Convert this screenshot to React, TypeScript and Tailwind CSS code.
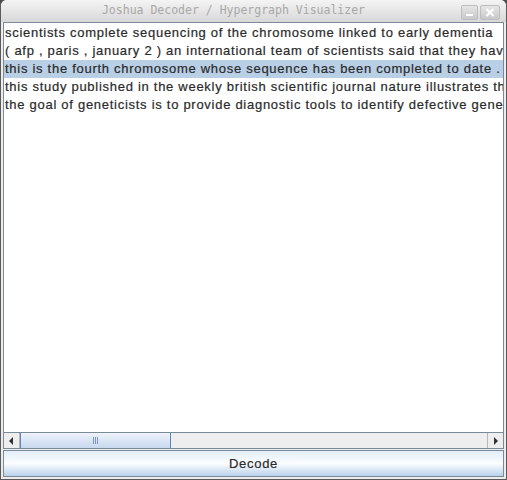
import React from "react";

const rows = [
  "scientists complete sequencing of the chromosome linked to early dementia",
  "( afp , paris , january 2 ) an international team of scientists said that they have",
  "this is the fourth chromosome whose sequence has been completed to date .",
  "this study published in the weekly british scientific journal nature illustrates the",
  "the goal of geneticists is to provide diagnostic tools to identify defective genes",
];

const textStyle: React.CSSProperties = {
  fontFamily: '"Liberation Sans", Arial, sans-serif',
  WebkitTextStroke: "0.2px #2a2a2a",
};

export default function App() {
  return (
    <div className="w-[507px] h-[480px] bg-[#4a4a4a] overflow-hidden">
      <div className="w-[507px] h-[480px] flex flex-col rounded-t-[6px] bg-[#ececec] border-l border-r border-b border-[#5a5a5a]">
        {/* title bar */}
        <div className="h-[22px] shrink-0 relative flex items-center justify-center rounded-t-[6px] bg-gradient-to-b from-[#f4f4f4] to-[#d8d8d8]">
          <span className="text-[11.5px] text-[#a8a8a8] pr-[40px]" style={{ fontFamily: '"DejaVu Sans Mono", monospace' }}>
            Joshua Decoder / Hypergraph Visualizer
          </span>
          <div className="absolute right-[6px] top-[5px] flex gap-[2px]">
            <div className="w-[17px] h-[15px] rounded-[2px] bg-gradient-to-b from-[#e6e6e6] to-[#c8c8c8] border border-[#bdbdbd] flex items-end justify-center pb-[3px]">
              <div className="w-[7px] h-[2px] bg-white" />
            </div>
            <div className="w-[20px] h-[15px] rounded-[2px] bg-gradient-to-b from-[#e6e6e6] to-[#c8c8c8] border border-[#bdbdbd] flex items-center justify-center">
              <svg width="10" height="9" viewBox="0 0 10 9">
                <path d="M1.5 1 L8.5 8 M8.5 1 L1.5 8" stroke="#fff" strokeWidth="2.2" />
              </svg>
            </div>
          </div>
        </div>
        {/* body */}
        <div className="flex-1 flex flex-col px-[2px] pb-[2px]">
          <div className="flex-1 flex flex-col border border-[#7a8a99] bg-white overflow-hidden">
            <div className="flex-1 overflow-hidden pt-[1px]">
              {rows.map((r, i) => (
                <div
                  key={i}
                  className={`h-[18px] leading-[18px] pl-[1px] whitespace-nowrap text-[13px] tracking-[0.72px] text-[#2a2a2a] ${i === 2 ? "bg-[#b8cfe5]" : ""}`}
                  style={textStyle}
                >
                  {r}
                </div>
              ))}
            </div>
            {/* horizontal scrollbar */}
            <div className="h-[16px] shrink-0 flex border-t border-[#7a8a99] bg-[#eeeeee]">
              <div className="w-[16px] flex items-center justify-center border-r border-[#b8b8b8] bg-[#eeeeee]">
                <svg width="5" height="8" viewBox="0 0 5 8"><path d="M4 0 L0 4 L4 8 Z" fill="#333" /></svg>
              </div>
              <div className="w-[151px] flex items-center justify-center border-r border-[#6382bf] bg-gradient-to-b from-[#eef3fb] to-[#c8d8ee] border-l border-[#6382bf]">
                <div className="flex gap-[1px]">
                  <div className="w-[1px] h-[7px] bg-[#8095b8]" />
                  <div className="w-[1px] h-[7px] bg-[#8095b8]" />
                  <div className="w-[1px] h-[7px] bg-[#8095b8]" />
                </div>
              </div>
              <div className="flex-1" />
              <div className="w-[16px] flex items-center justify-center border-l border-[#b8b8b8] bg-[#eeeeee]">
                <svg width="5" height="8" viewBox="0 0 5 8"><path d="M1 0 L5 4 L1 8 Z" fill="#333" /></svg>
              </div>
            </div>
          </div>
          {/* button */}
          <div
            className="h-[27px] mt-[1px] shrink-0 flex items-center justify-center border border-[#7a8a99] bg-gradient-to-b from-[#e3edf8] via-[#fbfdff] to-[#b9d1ea] text-[13px] tracking-[0.72px] text-[#2a2a2a]"
            style={textStyle}
          >
            Decode
          </div>
        </div>
      </div>
    </div>
  );
}
